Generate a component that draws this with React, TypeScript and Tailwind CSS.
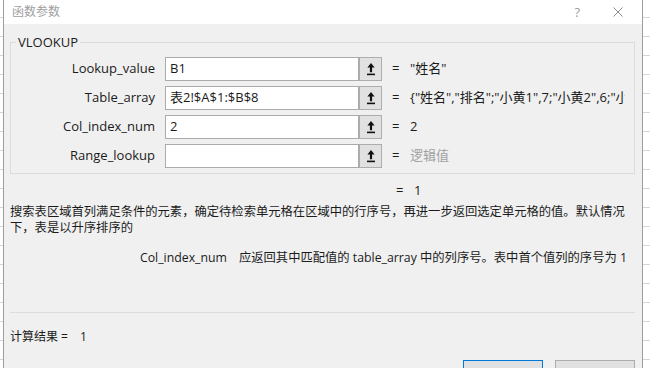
import React from 'react';

// Excel "函数参数" dialog for VLOOKUP

const font = "font-['Open_Sans','Noto_Sans_CJK_SC',sans-serif]";
const gridBg =
  'bg-[repeating-linear-gradient(to_bottom,transparent_0px,transparent_17px,#d6d6d6_17px,#d6d6d6_18px,transparent_18px,transparent_19px)]';

const RefIcon = () => (
  <svg width="10" height="14" viewBox="0 0 10 14">
    <polygon points="5,1 8.6,5.6 6.1,5.6 6.1,10.2 3.9,10.2 3.9,5.6 1.4,5.6" fill="#111" />
    <rect x="1" y="11.6" width="8" height="1.6" fill="#111" />
  </svg>
);

interface ArgRow {
  label: string;
  input: string;
  value: string;
  muted?: boolean;
}

const rows: ArgRow[] = [
  { label: 'Lookup_value', input: 'B1', value: '"姓名"' },
  { label: 'Table_array', input: '表2!$A$1:$B$8', value: '{"姓名","排名";"小黄1",7;"小黄2",6;"小黄3",5;"小黄4",4}' },
  { label: 'Col_index_num', input: '2', value: '2' },
  { label: 'Range_lookup', input: '', value: '逻辑值', muted: true },
];

export default function App() {
  return (
    <div className={`w-[650px] h-[368px] overflow-hidden flex bg-white text-[#1b1b1b] ${font}`}>
      <div className={`w-[3px] shrink-0 ${gridBg}`} />

      <div className="w-[640px] shrink-0 flex flex-col border-x border-[#9d9d9d] bg-[#f0f0f0]">
        {/* Title bar */}
        <div className="h-[24px] shrink-0 bg-white flex items-center pl-[8px] pr-[19px] text-[#a0a0a0]">
          <span className="text-[12px] leading-none">函数参数</span>
          <div className="flex-1" />
          <span className="text-[13px] leading-none">?</span>
          <svg className="ml-[33px]" width="10" height="10" viewBox="0 0 10 10">
            <path d="M0.5 0.5 L9.5 9.5 M9.5 0.5 L0.5 9.5" stroke="#8a8a8a" strokeWidth="1" />
          </svg>
        </div>

        <div className="flex-1 min-w-0 flex flex-col pl-[6px] pr-[7px]">
          {/* Group box */}
          <fieldset className="mt-[9px] min-w-0 border border-[#dcdcdc] pr-[9px] pb-[5px]">
            <legend className="ml-[5px] px-[2px] text-[13px] leading-[18px]">VLOOKUP</legend>
            <div className="flex flex-col gap-[5px] pt-[6px]">
              {rows.map((r) => (
                <div key={r.label} className="flex items-center h-[24px] min-w-0">
                  <div className="w-[144px] shrink-0 text-right text-[13px]">{r.label}</div>
                  <div className="ml-[10px] w-[194px] shrink-0 h-full border border-[#ababab] bg-white pl-[4px] flex items-center text-[13px] whitespace-nowrap">
                    {r.input}
                  </div>
                  <div className="w-[23px] shrink-0 h-full border border-[#adadad] bg-[#e1e1e1] flex items-center justify-center">
                    <RefIcon />
                  </div>
                  <div className="ml-[10px] w-[18px] shrink-0 text-[13px]">=</div>
                  <div
                    className={`flex-1 min-w-0 overflow-hidden whitespace-nowrap text-[13px] ${
                      r.muted ? 'text-[#a0a0a0]' : ''
                    }`}
                  >
                    {r.value}
                  </div>
                </div>
              ))}
            </div>
          </fieldset>

          {/* Result of the formula */}
          <div className="mt-[8px] pl-[386px] flex text-[13px] leading-[16px]">
            <span className="w-[18px]">=</span>
            <span>1</span>
          </div>

          {/* Description */}
          <p className="mt-[6px] w-[618px] text-[12.3px] leading-[16px]">
            搜索表区域首列满足条件的元素，确定待检索单元格在区域中的行序号，再进一步返回选定单元格的值。默认情况下，表是以升序排序的
          </p>

          <div className="mt-[14px] pr-[8px] flex justify-end gap-[12px] text-[12.3px] leading-[16px] whitespace-nowrap">
            <span>Col_index_num</span>
            <span>应返回其中匹配值的 table_array 中的列序号。表中首个值列的序号为 1</span>
          </div>

          <div className="mt-[46px] border-t border-[#dcdcdc]" />

          <div className="mt-[16px] flex text-[12px] leading-[16px]">
            <span>计算结果 =</span>
            <span className="ml-[12px]">1</span>
          </div>

          {/* Dialog buttons (labels fall below the visible area) */}
          <div className="mt-[15px] flex justify-end gap-[12px]">
            <button className="w-[80px] h-[24px] border border-[#0078d7] bg-[#e1e1e1]" />
            <button className="w-[80px] h-[24px] border border-[#adadad] bg-[#e1e1e1]" />
          </div>
        </div>
      </div>

      <div className={`flex-1 ${gridBg}`} />
    </div>
  );
}
